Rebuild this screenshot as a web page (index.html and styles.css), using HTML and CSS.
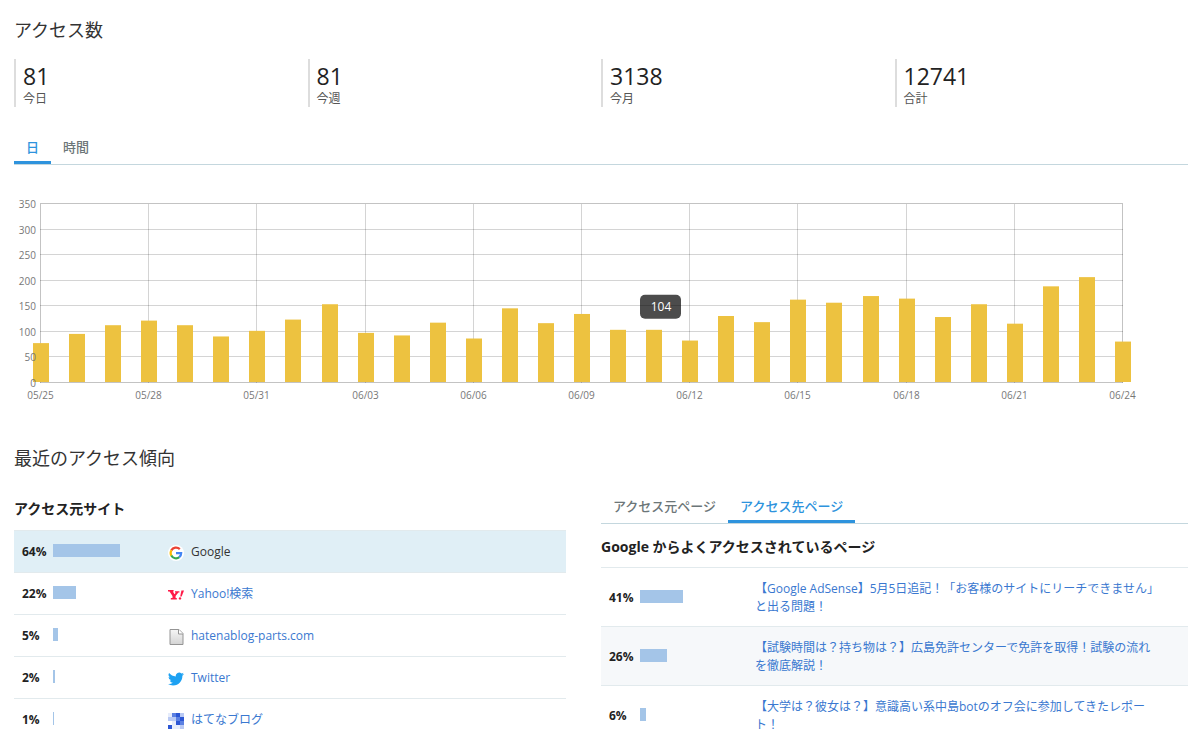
FILE: index.html
```html
<!DOCTYPE html>
<html lang="ja">
<head>
    <meta charset="UTF-8">
    <meta name="viewport" content="width=device-width, initial-scale=1.0">
    <title>アクセス解析</title>
    <link rel="stylesheet" href="styles.css">
</head>
<body>
    <main class="page">

        <section>
            <h2>アクセス数</h2>
            <div class="counts">
                <div class="count"><strong>81</strong><span>今日</span></div>
                <div class="count"><strong>81</strong><span>今週</span></div>
                <div class="count"><strong>3138</strong><span>今月</span></div>
                <div class="count"><strong>12741</strong><span>合計</span></div>
            </div>

            <div class="tabs">
                <button type="button" class="tab active">日</button>
                <button type="button" class="tab">時間</button>
            </div>

            <svg class="chart" id="chart" viewBox="0 0 1174 220" role="img" aria-label="アクセス数のグラフ"></svg>
        </section>

        <section>
            <h2>最近のアクセス傾向</h2>
            <div class="trend">

                <div class="sites">
                    <h3>アクセス元サイト</h3>
                    <table>
                        <tr class="selected">
                            <td class="percent">64%</td>
                            <td class="graph"><div class="bar" style="width: 64%"></div></td>
                            <td class="name"><div class="site">
                                <svg class="icon" viewBox="0 0 16 16">
                                    <circle cx="8" cy="8" r="8" fill="#fff"/>
                                    <path d="M3.3 5.4A5.4 5.4 0 0 1 11.8 4.1" fill="none" stroke="#ea4335" stroke-width="2.2"/>
                                    <path d="M3.4 10.7A5.4 5.4 0 0 1 3.4 5.3" fill="none" stroke="#fbbc05" stroke-width="2.2"/>
                                    <path d="M11.4 12.2A5.4 5.4 0 0 1 3.3 10.5" fill="none" stroke="#34a853" stroke-width="2.2"/>
                                    <path d="M8 8.1H13.2A5.2 5.2 0 0 1 11.3 12.2" fill="none" stroke="#4285f4" stroke-width="2.2"/>
                                </svg>
                                <span>Google</span>
                            </div></td>
                        </tr>
                        <tr>
                            <td class="percent">22%</td>
                            <td class="graph"><div class="bar" style="width: 22%"></div></td>
                            <td class="name"><div class="site">
                                <svg class="icon" viewBox="0 0 16 16" fill="#ff1a48">
                                    <path d="M0 3H5.6V4.4H4.9L6.5 7.2L7.9 5.4H7V4.2H11.4V5.4H10.4L7.6 9V11.1H8.8V12.5H2.8V11.1H4.5V9L1.5 4.4H0Z"/>
                                    <path d="M13.4 3.6H16L13.7 9.6H12.2Z"/>
                                    <circle cx="12" cy="11.4" r="1.2"/>
                                </svg>
                                <a href="#">Yahoo!検索</a>
                            </div></td>
                        </tr>
                        <tr>
                            <td class="percent">5%</td>
                            <td class="graph"><div class="bar" style="width: 5%"></div></td>
                            <td class="name"><div class="site">
                                <svg class="icon" viewBox="0 0 16 16">
                                    <defs>
                                        <linearGradient id="paper" x1="0" y1="0" x2="0" y2="1">
                                            <stop offset="0" stop-color="#f6f6f6"/>
                                            <stop offset="1" stop-color="#d4d4d4"/>
                                        </linearGradient>
                                    </defs>
                                    <path d="M2 .5H11L15 4.5V15.5H2Z" fill="url(#paper)" stroke="#949494"/>
                                    <path d="M10.5 .5V5H15" fill="#fff" stroke="#949494"/>
                                </svg>
                                <a href="#">hatenablog-parts.com</a>
                            </div></td>
                        </tr>
                        <tr>
                            <td class="percent">2%</td>
                            <td class="graph"><div class="bar" style="width: 2%"></div></td>
                            <td class="name"><div class="site">
                                <svg class="icon" viewBox="0 0 24 24" fill="#1da1f2">
                                    <path d="M23.95 4.57a10 10 0 0 1-2.82.77 4.96 4.96 0 0 0 2.16-2.72c-.95.55-2 .95-3.13 1.18a4.92 4.92 0 0 0-8.38 4.48C7.69 8.1 4.07 6.13 1.64 3.16a4.92 4.92 0 0 0 1.52 6.57 4.9 4.9 0 0 1-2.23-.61v.06a4.92 4.92 0 0 0 3.95 4.83 5 5 0 0 1-2.21.08 4.94 4.94 0 0 0 4.6 3.42A9.87 9.87 0 0 1 0 19.54a14 14 0 0 0 7.55 2.21c9.05 0 14-7.5 14-13.98l-.02-.64a10 10 0 0 0 2.42-2.56z"/>
                                </svg>
                                <a href="#">Twitter</a>
                            </div></td>
                        </tr>
                        <tr>
                            <td class="percent">1%</td>
                            <td class="graph"><div class="bar" style="width: 1%"></div></td>
                            <td class="name"><div class="site">
                                <svg class="icon" viewBox="0 0 16 16">
                                    <path d="M0 0H4V4H0ZM4 8H8V12H4ZM4 12H8V16H4ZM8 12H12V16H8Z" fill="#e6ecfb"/>
                                    <path d="M0 4H4V8H0ZM4 4H8V8H4ZM12 0H16V4H12ZM12 12H16V16H12Z" fill="#b9c9f4"/>
                                    <path d="M4 0H8V4H4ZM8 4H12V8H8ZM12 8H16V12H12Z" fill="#5b80e2"/>
                                    <path d="M8 0H12V4H8ZM12 4H16V8H12ZM8 8H12V12H8ZM0 12H4V16H0Z" fill="#2c56d4"/>
                                </svg>
                                <a href="#">はてなブログ</a>
                            </div></td>
                        </tr>
                    </table>
                </div>

                <div class="pages">
                    <div class="tabs">
                        <button type="button" class="tab">アクセス元ページ</button>
                        <button type="button" class="tab active">アクセス先ページ</button>
                    </div>
                    <h3>Google からよくアクセスされているページ</h3>
                    <table>
                        <tr>
                            <td class="percent">41%</td>
                            <td class="graph"><div class="bar" style="width: 41%"></div></td>
                            <td class="name"><a href="#">【Google AdSense】5月5日追記！「お客様のサイトにリーチできません」<br>と出る問題！</a></td>
                        </tr>
                        <tr class="even">
                            <td class="percent">26%</td>
                            <td class="graph"><div class="bar" style="width: 26%"></div></td>
                            <td class="name"><a href="#">【試験時間は？持ち物は？】広島免許センターで免許を取得！試験の流れ<br>を徹底解説！</a></td>
                        </tr>
                        <tr>
                            <td class="percent">6%</td>
                            <td class="graph"><div class="bar" style="width: 6%"></div></td>
                            <td class="name"><a href="#">【大学は？彼女は？】意識高い系中島botのオフ会に参加してきたレポー<br>ト！</a></td>
                        </tr>
                    </table>
                </div>

            </div>
        </section>

    </main>
    <script src="chart.js"></script>
</body>
</html>
```
FILE: styles.css
```css
* {
    box-sizing: border-box;
}
body {
    margin: 0;
    background: #fff;
    color: #333;
    font-family: "Open Sans", "Noto Sans CJK JP", sans-serif;
    font-size: 12px;
    line-height: 18px;
    text-spacing-trim: space-all;
}
.page {
    padding: 16px 12px 0 14px;
}
h2 {
    margin: 0;
    font-size: 18px;
    line-height: 28px;
    font-weight: normal;
}
h3 {
    margin: 0;
    color: #222;
    font-size: 14px;
    line-height: 20px;
    font-weight: bold;
}
a {
    color: #3a78d0;
    text-decoration: none;
}

/* counters */
.counts {
    display: grid;
    grid-template-columns: repeat(4, 1fr);
    margin-top: 15px;
}
.count {
    height: 48px;
    padding: 4px 0 0 7px;
    border-left: 2px solid #ddd;
}
.count strong {
    display: block;
    color: #222;
    font-size: 23px;
    line-height: 27px;
    font-weight: normal;
}
.count span {
    display: block;
    color: #555;
}

/* tabs */
.tabs {
    display: flex;
    border-bottom: 1px solid #c4d7de;
}
.counts + .tabs {
    margin-top: 21px;
}
.tab {
    height: 36px;
    padding: 3px 12px 0;
    border: 0;
    border-bottom: 3px solid transparent;
    background: none;
    color: #6c7678;
    font-family: inherit;
    font-size: 13px;
    font-weight: 500;
    cursor: pointer;
}
.tab.active {
    color: #2e93dd;
    border-bottom-color: #2e93dd;
}

/* chart */
.chart {
    display: block;
    width: 100%;
    margin: 25px 0 34px;
}
.grid {
    stroke: #000;
    stroke-opacity: 0.17;
}
.frame {
    fill: none;
    stroke: #000;
    stroke-opacity: 0.08;
}
.column {
    fill: #edc240;
}
.tick {
    fill: #777;
    font-size: 10px;
}
.tooltip {
    fill: #000;
    fill-opacity: 0.7;
}
.value {
    fill: #fff;
    font-size: 12px;
}

/* trend */
.trend {
    display: grid;
    grid-template-columns: 47% 50%;
    justify-content: space-between;
    margin-top: 15px;
}
.sites h3 {
    margin: 12px 0 11px;
}
.pages h3 {
    margin: 13px 0 10px;
}
table {
    width: 100%;
    border-collapse: separate;
    border-spacing: 0;
    table-layout: fixed;
}
td {
    height: 42px;
    padding: 1px 0 0;
    border-top: 1px solid #e2eaed;
    vertical-align: middle;
}
.percent {
    width: 39px;
    padding-left: 8px;
    color: #222;
    font-weight: bold;
}
.graph {
    width: 104px;
}
.bar {
    height: 13px;
    margin-bottom: 4px;
    background: #a4c5e8;
}
.name {
    padding-left: 11px;
}
.selected {
    background: #e0eff6;
}
.even {
    background: #f6f8fa;
}
.site {
    display: flex;
    align-items: center;
    gap: 7px;
}
.icon {
    width: 16px;
    height: 16px;
    margin-top: 2px;
}
.pages td {
    height: 59px;
    padding-top: 2px;
}
```
FILE: chart.js
```js
const views = [78, 96, 113, 122, 113, 91, 102, 124, 154, 98, 93, 118, 87, 146, 117, 135,
    104, 104, 83, 131, 119, 163, 157, 170, 165, 129, 154, 116, 189, 207, 81];
const labels = ['05/25', '05/28', '05/31', '06/03', '06/06', '06/09', '06/12', '06/15', '06/18', '06/21', '06/24'];

const left = 27;
const right = 1109;
const top_ = 14;
const bottom = 193;
const max = 350;

const x = i => Math.round(left + (right - left) * i / (views.length - 1));
const y = v => bottom - (bottom - top_) * v / max;

let svg = '';

// tooltip of 06/11, the grid is drawn over it
svg += `<rect class="tooltip" x="${x(17) - 14}" y="${y(104) - 35}" width="41" height="24" rx="5"/>`;

for (let v = 0; v <= max; v += 50) {
    const ly = Math.round(y(v)) - 0.5;
    svg += `<line class="grid" x1="${left - 1}" y1="${ly}" x2="${right}" y2="${ly}"/>`;
}
labels.forEach((label, n) => {
    const lx = x(n * 3) - 0.5;
    svg += `<line class="grid" x1="${lx}" y1="${top_}" x2="${lx}" y2="${bottom}"/>`;
    svg += `<text class="tick" x="${lx}" y="209" text-anchor="middle">${label}</text>`;
});
svg += `<rect class="frame" x="${left - 0.5}" y="${top_ - 0.5}" width="${right - left}" height="${bottom - top_}"/>`;

views.forEach((v, i) => {
    svg += `<rect class="column" x="${x(i) - 8}" y="${y(v)}" width="16" height="${bottom - y(v) - 1}"/>`;
});
for (let v = 0; v <= max; v += 50) {
    svg += `<text class="tick" x="22" y="${Math.round(y(v)) + 4}" text-anchor="end">${v}</text>`;
}
svg += `<text class="value" x="${x(17) + 7}" y="${y(104) - 19}" text-anchor="middle">${views[17]}</text>`;

document.getElementById('chart').innerHTML = svg;
```
